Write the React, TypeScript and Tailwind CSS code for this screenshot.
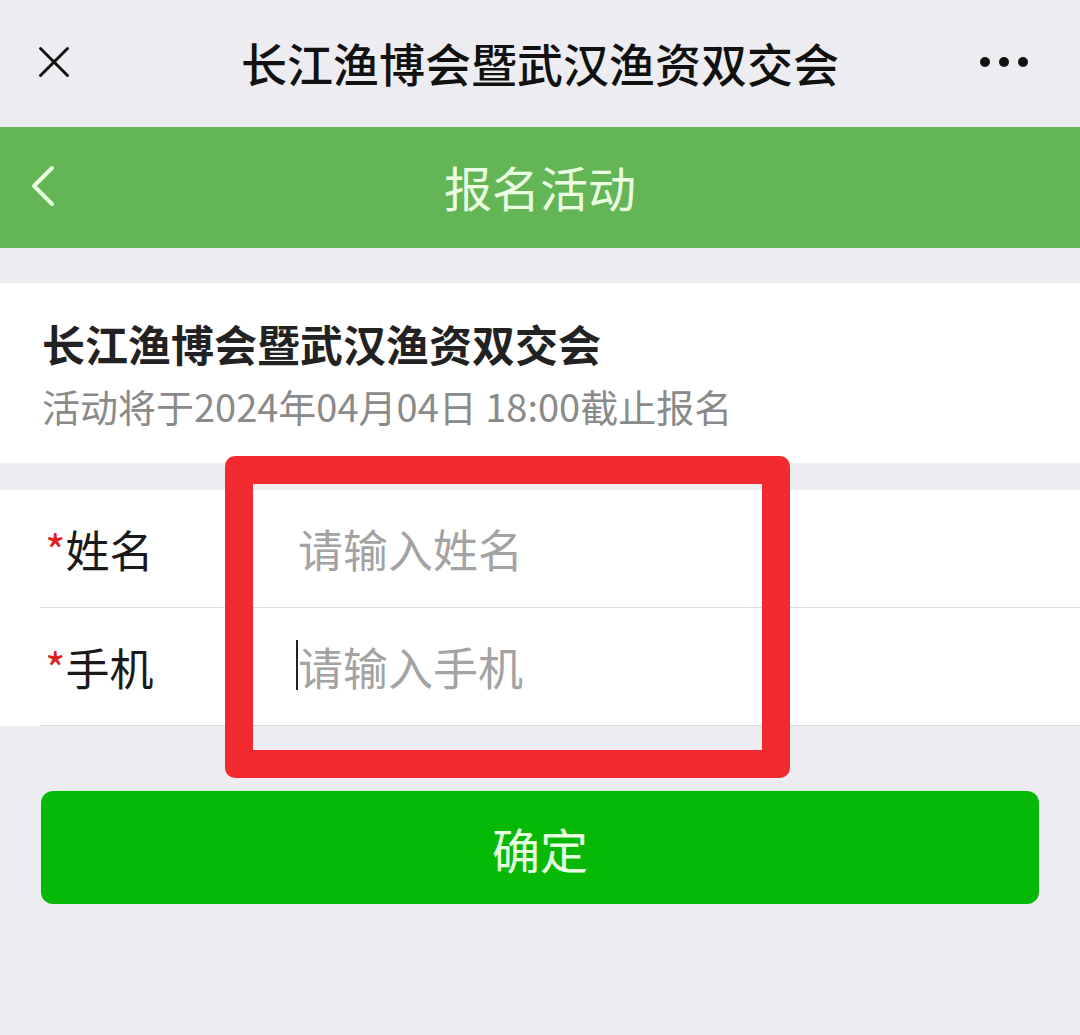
import { ChevronLeft, X } from "lucide-react";

const font = { fontFamily: '"Noto Sans CJK SC", "Noto Sans", sans-serif' };

const Field = ({ label, placeholder, cursor }: { label: string; placeholder: string; cursor?: boolean }) => (
  <div className="ml-[40px] flex h-[118px] items-center border-b border-[#dcdcdc]">
    <div className="w-[258px] pl-[5px] text-[44px] leading-none text-[#1a1a1a]">
      <span className="text-[#e02020]">*</span>
      {label}
    </div>
    <div className="relative flex items-center text-[45px] leading-none text-[#a3a3a3]">
      {cursor && <span className="absolute -left-[2px] top-[-4px] h-[50px] w-[2px] bg-[#222]" />}
      {placeholder}
    </div>
  </div>
);

const App = () => {
  return (
    <div className="relative h-[1035px] w-[1080px] overflow-hidden bg-[#ededf1]" style={font}>
      {/* wechat top bar */}
      <div className="relative flex h-[127px] items-center justify-center pb-[4px]">
        <X className="absolute left-[27px] h-[54px] w-[54px] text-[#111]" strokeWidth={1.3} />
        <div className="text-[46px] font-medium leading-none text-[#111]">长江渔博会暨武汉渔资双交会</div>
        <div className="absolute right-[52px] flex gap-[9px]">
          <span className="h-[10px] w-[10px] rounded-full bg-[#111]" />
          <span className="h-[10px] w-[10px] rounded-full bg-[#111]" />
          <span className="h-[10px] w-[10px] rounded-full bg-[#111]" />
        </div>
      </div>

      {/* green header */}
      <div className="relative flex h-[121px] items-center justify-center bg-[#63b556] pb-[4px]">
        <ChevronLeft className="absolute left-[7px] h-[72px] w-[72px] text-[#eaffe2]" strokeWidth={1.3} />
        <div className="text-[48px] leading-none text-[#eaffe2]">报名活动</div>
      </div>

      <div className="h-[35px]" />

      {/* activity card */}
      <div className="flex h-[180px] flex-col justify-center bg-white px-[42px]">
        <div className="text-[43px] font-bold leading-none text-[#222]">长江渔博会暨武汉渔资双交会</div>
        <div className="mt-[22px] text-[38px] leading-none text-[#8a8a8a]">活动将于2024年04月04日 18:00截止报名</div>
      </div>

      <div className="h-[27px]" />

      {/* form */}
      <div className="bg-white">
        <Field label="姓名" placeholder="请输入姓名" />
        <Field label="手机" placeholder="请输入手机" cursor />
      </div>

      {/* submit */}
      <div className="px-[41px] pt-[65px]">
        <div className="flex h-[113px] items-center justify-center rounded-[12px] bg-[#07b907] text-[48px] leading-none text-[#e8ffe2]">
          确定
        </div>
      </div>

      {/* red annotation box */}
      <div className="absolute left-[225px] top-[456px] h-[322px] w-[565px] rounded-[10px] border-[28px] border-[#f22a30]" />
    </div>
  );
};

export default App;
